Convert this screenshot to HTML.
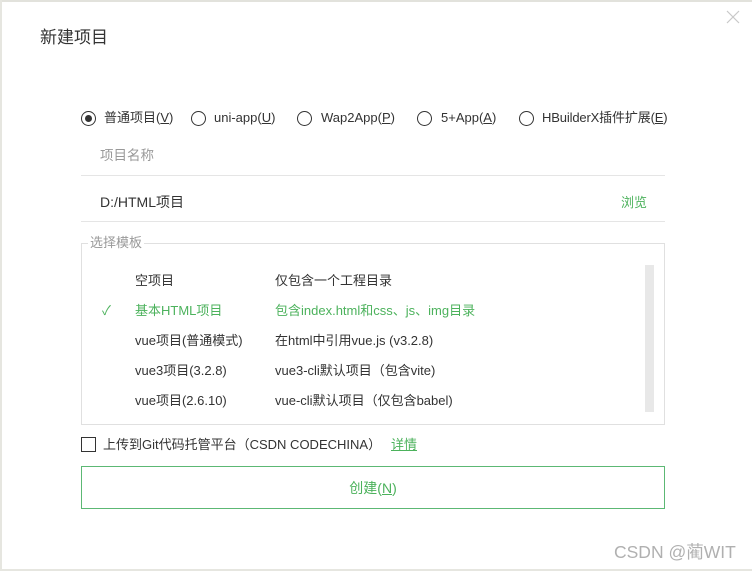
<!DOCTYPE html>
<html><head><meta charset="utf-8"><style>
*{margin:0;padding:0;box-sizing:border-box}
body{width:752px;height:571px;background:#fff;position:relative;overflow:hidden;font-family:"Liberation Sans","Noto Sans CJK SC",sans-serif;color:#333;font-size:13px}
.a{position:absolute;white-space:nowrap;line-height:16px}
.g{color:#4cb25c}
u{text-decoration:underline}
.r{position:absolute;width:15px;height:15px;border:1.3px solid #333;border-radius:50%;top:111px}
</style></head><body>
<div style="position:absolute;left:0;top:0;width:752px;height:2px;background:#e2e2dc"></div>
<div style="position:absolute;left:0;top:0;width:2px;height:571px;background:#e6e6e0"></div>
<div style="position:absolute;left:0;bottom:0;width:752px;height:2px;background:#e6e6e0"></div>
<div class="a" style="left:40px;top:28px;font-size:17px;line-height:20px;color:#333">新建项目</div>
<svg style="position:absolute;left:726px;top:10px" width="14" height="14"><path d="M1 1L13 13M13 1L1 13" stroke="#c8c8c8" stroke-width="1.2"/></svg>

<div class="r" style="left:81px"><div style="position:absolute;left:2.7px;top:2.7px;width:7px;height:7px;border-radius:50%;background:#333"></div></div>
<div class="a" style="left:104px;top:110px">普通项目(<u>V</u>)</div>
<div class="r" style="left:191px"></div><div class="a" style="left:214px;top:110px">uni-app(<u>U</u>)</div>
<div class="r" style="left:297px"></div><div class="a" style="left:321px;top:110px">Wap2App(<u>P</u>)</div>
<div class="r" style="left:417px"></div><div class="a" style="left:441px;top:110px">5+App(<u>A</u>)</div>
<div class="r" style="left:519px"></div><div class="a" style="left:542px;top:110px;letter-spacing:-0.15px">HBuilderX插件扩展(<u>E</u>)</div>

<div class="a" style="left:100px;top:148px;color:#999;font-size:13.5px">项目名称</div>
<div style="position:absolute;left:81px;top:175px;width:584px;height:1px;background:#e5e5e5"></div>
<div class="a" style="left:100px;top:194px;font-size:14px">D:/HTML项目</div>
<div class="a g" style="left:621px;top:195px">浏览</div>
<div style="position:absolute;left:81px;top:221px;width:584px;height:1px;background:#e5e5e5"></div>

<div style="position:absolute;left:81px;top:243px;width:584px;height:182px;border:1px solid #e0e0e0"></div>
<div class="a" style="left:88px;top:235px;background:#fff;color:#999;padding:0 2px">选择模板</div>
<div style="position:absolute;left:645px;top:265px;width:9px;height:147px;background:#e8e8e8"></div>
<div class="a" style="left:135px;top:273px">空项目</div><div class="a" style="left:275px;top:273px">仅包含一个工程目录</div>
<div class="a g" style="left:102px;top:303px">✓</div>
<div class="a g" style="left:135px;top:303px">基本HTML项目</div><div class="a g" style="left:275px;top:303px">包含index.html和css、js、img目录</div>
<div class="a" style="left:135px;top:333px">vue项目(普通模式)</div><div class="a" style="left:275px;top:333px">在html中引用vue.js (v3.2.8)</div>
<div class="a" style="left:135px;top:363px">vue3项目(3.2.8)</div><div class="a" style="left:275px;top:363px">vue3-cli默认项目（包含vite)</div>
<div class="a" style="left:135px;top:393px">vue项目(2.6.10)</div><div class="a" style="left:275px;top:393px">vue-cli默认项目（仅包含babel)</div>

<div style="position:absolute;left:81px;top:437px;width:15px;height:15px;border:1.3px solid #333"></div>
<div class="a" style="left:103px;top:437px">上传到Git代码托管平台（CSDN CODECHINA）</div>
<div class="a g" style="left:391px;top:437px"><u>详情</u></div>

<div style="position:absolute;left:81px;top:466px;width:584px;height:43px;border:1px solid #5cb874"></div>
<div class="a g" style="left:81px;width:584px;text-align:center;top:480px;font-size:14px">创建(<u>N</u>)</div>

<div class="a" style="left:614px;top:543px;font-size:17.5px;line-height:19px;color:#b0b0b0">CSDN @蔺WIT</div>
</body></html>
